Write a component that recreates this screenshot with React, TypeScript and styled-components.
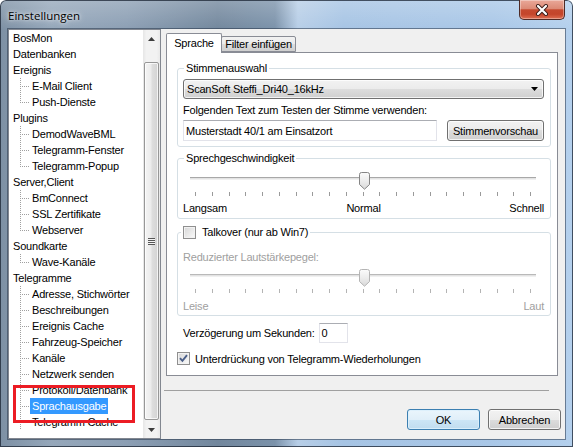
import React from 'react';
import styled, { createGlobalStyle } from 'styled-components';

const GlobalStyle = createGlobalStyle`
  html, body { margin: 0; padding: 0; background: #ffffff; }
  body {
    font-family: "Liberation Sans", Arial, sans-serif;
    font-size: 11px;
    letter-spacing: -0.2px;
    color: #000;
  }
  * { box-sizing: border-box; }
`;

const Window = styled.div`
  position: relative;
  width: 573px;
  height: 447px;
  display: flex;
  flex-direction: column;
  overflow: hidden;
  border-radius: 6px 6px 0 0;
  background:
    linear-gradient(to bottom, rgba(255, 255, 255, 0.22), rgba(255, 255, 255, 0) 30px),
    linear-gradient(
      to right,
      #7d90a4 0%,
      #95a7ba 9%,
      #8c9fb4 22%,
      #72879d 38%,
      #7b92aa 48%,
      #b7cee7 52%,
      #a6c4e4 60%,
      #a9c7e7 86%,
      #b4d0ed 100%
    );
  box-shadow: inset 0 0 0 1px rgba(25, 35, 50, 0.75);
`;

const TitleBar = styled.div`
  flex: none;
  height: 29px;
  display: flex;
  align-items: flex-start;
  padding-left: 8px;
`;

const Title = styled.div`
  margin-top: 8px;
  font-family: "Open Sans", "Noto Sans", sans-serif;
  font-size: 11.5px;
  line-height: 16px;
  letter-spacing: 0;
  color: #000;
  text-shadow: 0 0 6px rgba(255, 255, 255, 0.85), 0 0 3px rgba(255, 255, 255, 0.7);
`;

const CloseButton = styled.div`
  margin-left: auto;
  margin-right: 8px;
  width: 46px;
  height: 20px;
  display: flex;
  align-items: center;
  justify-content: center;
  border: 1px solid #4f2a25;
  border-top: none;
  border-radius: 0 0 5px 5px;
  background: linear-gradient(
    to bottom,
    #e9a899 0%,
    #dc8a76 45%,
    #c5492f 52%,
    #c4452b 75%,
    #de6f53 100%
  );
  box-shadow: inset 0 0 0 1px rgba(255, 255, 255, 0.35);
`;

const Client = styled.div`
  flex: none;
  margin: 0 8px;
  height: 410px;
  display: flex;
  background: #f0f0f0;
  box-shadow: 0 0 0 1px rgba(40, 55, 75, 0.55);
`;

/* ---------- tree ---------- */

const TreePane = styled.div`
  position: relative;
  flex: none;
  width: 153px;
  height: 410px;
  display: flex;
  border: 1px solid #828790;
  background: #fff;
`;

const TreeList = styled.div`
  flex: 1;
  overflow: hidden;
`;

const TreeRow = styled.div<{ $child?: boolean }>`
  height: 16px;
  display: flex;
  align-items: center;
  padding-left: ${(p) => (p.$child ? 0 : 2)}px;
  white-space: nowrap;
`;

const Connector = styled.span<{ $last?: boolean }>`
  position: relative;
  flex: none;
  width: 21px;
  height: 16px;
  &::before {
    content: '';
    position: absolute;
    left: 11px;
    top: 0;
    width: 1px;
    height: ${(p) => (p.$last ? 9 : 16)}px;
    background: repeating-linear-gradient(to bottom, #a0a0a0 0 1px, transparent 1px 2px);
  }
  &::after {
    content: '';
    position: absolute;
    left: 12px;
    top: 8px;
    width: 8px;
    height: 1px;
    background: repeating-linear-gradient(to right, transparent 0 1px, #a0a0a0 1px 2px);
  }
`;

const ItemLabel = styled.span<{ $selected?: boolean }>`
  display: block;
  height: 16px;
  line-height: 16px;
  padding: 0 2px;
  background: ${(p) => (p.$selected ? '#3399ff' : 'transparent')};
  color: ${(p) => (p.$selected ? '#fff' : '#000')};
`;

const ScrollBar = styled.div`
  flex: none;
  width: 17px;
  display: flex;
  flex-direction: column;
  background: linear-gradient(to right, #e6e6e6 0%, #f2f2f2 20%, #f2f2f2 80%, #e9e9e9 100%);
`;

const ScrollArrow = styled.div`
  flex: none;
  height: 17px;
  display: flex;
  align-items: center;
  justify-content: center;
`;

const ScrollTrack = styled.div`
  flex: 1;
  display: flex;
  flex-direction: column;
  padding: 15px 1px 1px 1px;
`;

const ScrollThumb = styled.div`
  flex: 1;
  display: flex;
  align-items: center;
  justify-content: center;
  border: 1px solid #979797;
  border-radius: 2px;
  background: linear-gradient(to right, #f4f4f4 0%, #ececec 45%, #dedede 55%, #d3d3d3 100%);
  box-shadow: inset 0 0 0 1px rgba(255, 255, 255, 0.75);
`;

const Grip = styled.div`
  width: 7px;
  height: 7px;
  background: repeating-linear-gradient(to bottom, #575757 0 1px, #f4f4f4 1px 2px);
`;

const Annotation = styled.div`
  position: absolute;
  left: 4px;
  top: 355px;
  width: 122px;
  height: 38px;
  border: 3px solid #ec1c24;
  pointer-events: none;
`;

/* ---------- right side ---------- */

const RightPane = styled.div`
  flex: none;
  width: 395px;
  margin-left: 5px;
  display: flex;
  flex-direction: column;
`;

const TabControl = styled.div`
  width: 392px;
  margin-top: 4px;
  display: flex;
  flex-direction: column;
`;

const TabStrip = styled.div`
  position: relative;
  z-index: 1;
  height: 19px;
  display: flex;
  align-items: flex-end;
`;

const Tab = styled.div<{ $active?: boolean; $width: number }>`
  position: relative;
  z-index: ${(p) => (p.$active ? 2 : 1)};
  width: ${(p) => p.$width}px;
  height: ${(p) => (p.$active ? 20 : 16)}px;
  margin-bottom: ${(p) => (p.$active ? -1 : 0)}px;
  margin-left: ${(p) => (p.$active ? 0 : -1)}px;
  display: flex;
  justify-content: center;
  padding-top: ${(p) => (p.$active ? 3 : 1)}px;
  line-height: 13px;
  border: 1px solid #898c95;
  border-bottom: ${(p) => (p.$active ? 'none' : '1px solid #898c95')};
  border-radius: 2px 2px 0 0;
  background: ${(p) =>
    p.$active
      ? '#ffffff'
      : 'linear-gradient(to bottom, #f2f2f2 0%, #ebebeb 50%, #dddddd 50%, #cfcfcf 100%)'};
`;

const TabPage = styled.div`
  height: 324px;
  border: 1px solid #898c95;
  background: #fff;
  display: flex;
  flex-direction: column;
`;

const Group = styled.fieldset<{ $height: number; $top: number }>`
  margin: ${(p) => p.$top}px 6px 0 10px;
  padding: 0;
  height: ${(p) => p.$height}px;
  min-width: 0;
  border: 1px solid #d5dfe5;
  border-radius: 3px;
`;

const Legend = styled.legend<{ $offset: number; $disabledText?: boolean }>`
  margin-left: ${(p) => p.$offset}px;
  padding: 0 2px;
  height: 13px;
  line-height: 13px;
  display: flex;
  align-items: center;
  gap: 6px;
  color: ${(p) => (p.$disabledText ? '#a0a0a0' : '#000')};
`;

const GroupBody = styled.div<{ $top: number }>`
  padding: ${(p) => p.$top}px 6px 0 5px;
  display: flex;
  flex-direction: column;
`;

const ComboBox = styled.div`
  height: 20px;
  display: flex;
  align-items: center;
  justify-content: space-between;
  padding: 0 5px 0 3px;
  border: 1px solid #707070;
  border-radius: 3px;
  background: linear-gradient(to bottom, #f2f2f2 0%, #ebebeb 50%, #dddddd 50%, #cfcfcf 100%);
  box-shadow: inset 0 0 0 1px rgba(255, 255, 255, 0.75);
`;

const Caption = styled.div<{ $top: number; $disabled?: boolean }>`
  margin-top: ${(p) => p.$top}px;
  height: 13px;
  line-height: 13px;
  color: ${(p) => (p.$disabled ? '#a0a0a0' : '#000')};
`;

const InputRow = styled.div`
  margin-top: 3px;
  display: flex;
  justify-content: space-between;
`;

const TextBox = styled.div<{ $width: number }>`
  width: ${(p) => p.$width}px;
  height: ${(p) => (p.$width > 100 ? 21 : 20)}px;
  display: flex;
  align-items: center;
  padding-left: 2px;
  border: 1px solid #e2e3ea;
  border-top-color: #abadb3;
  background: #fff;
  white-space: nowrap;
`;

const PushButton = styled.div<{ $default?: boolean; $width: number; $height: number }>`
  width: ${(p) => p.$width}px;
  height: ${(p) => p.$height}px;
  display: flex;
  align-items: center;
  justify-content: center;
  border: 1px solid ${(p) => (p.$default ? '#3c7fb1' : '#707070')};
  border-radius: 3px;
  background: ${(p) =>
    p.$default
      ? 'linear-gradient(to bottom, #eaf5fc 0%, #e0eff9 50%, #cde6f6 50%, #c0dcef 100%)'
      : 'linear-gradient(to bottom, #f2f2f2 0%, #ebebeb 50%, #dddddd 50%, #cfcfcf 100%)'};
  box-shadow: inset 0 0 0 1px ${(p) => (p.$default ? 'rgba(220,240,252,0.9)' : 'rgba(255,255,255,0.75)')};
`;

const SliderBox = styled.div<{ $top: number }>`
  position: relative;
  margin-top: ${(p) => p.$top}px;
  height: 24px;
`;

const Track = styled.div<{ $disabled?: boolean }>`
  margin: 5px 0 0 7px;
  width: 346px;
  height: 3px;
  border-top: 1px solid ${(p) => (p.$disabled ? '#b9b9b9' : '#a8a8a8')};
  border-bottom: 1px solid #f0f0f0;
  background: #e3e3e3;
`;

const Ticks = styled.div`
  margin: 12px 0 0 12px;
  width: 336px;
  height: 4px;
  display: flex;
  justify-content: space-between;
`;

const Tick = styled.span<{ $disabled?: boolean }>`
  width: 1px;
  height: 4px;
  background: ${(p) => (p.$disabled ? '#b4b4b4' : '#9a9a9a')};
`;

const Thumb = styled.div`
  position: absolute;
  top: 0;
  width: 11px;
  height: 18px;
  line-height: 0;
`;

const ScaleLabels = styled.div<{ $top: number; $disabled?: boolean }>`
  margin-top: ${(p) => p.$top}px;
  height: 13px;
  line-height: 13px;
  display: grid;
  grid-template-columns: 1fr auto 1fr;
  color: ${(p) => (p.$disabled ? '#a0a0a0' : '#000')};
  & > :nth-child(1) { justify-self: start; }
  & > :nth-child(2) { justify-self: center; }
  & > :nth-child(3) { justify-self: end; }
`;

const FieldRow = styled.div`
  margin: 7px 0 0 16px;
  height: 20px;
  display: flex;
  align-items: center;
  gap: 4px;
`;

const CheckRow = styled.div`
  margin: 9px 0 0 10px;
  height: 13px;
  display: flex;
  align-items: center;
  gap: 5px;
`;

const CheckBox = styled.span<{ $checked?: boolean }>`
  flex: none;
  width: 13px;
  height: 13px;
  display: flex;
  align-items: center;
  justify-content: center;
  border: 1px solid #8f8f8f;
  background: linear-gradient(135deg, #d6d6d6 0%, #ececec 60%, #fbfbfb 100%);
  box-shadow: inset 0 0 0 1px #f2f2f2;
`;

const Separator = styled.div`
  margin: 14px 0 0 -2px;
  width: 385px;
  height: 1px;
  background: #a0a0a0;
`;

const ButtonRow = styled.div`
  margin-top: 18px;
  display: flex;
  justify-content: flex-end;
  gap: 8px;
`;

/* ---------- data ---------- */

type Node = { label: string; children?: string[]; continues?: boolean };

const tree: Node[] = [
  { label: 'BosMon' },
  { label: 'Datenbanken' },
  { label: 'Ereignis', children: ['E-Mail Client', 'Push-Dienste'] },
  { label: 'Plugins', children: ['DemodWaveBML', 'Telegramm-Fenster', 'Telegramm-Popup'] },
  { label: 'Server,Client', children: ['BmConnect', 'SSL Zertifikate', 'Webserver'] },
  { label: 'Soundkarte', children: ['Wave-Kanäle'] },
  {
    label: 'Telegramme',
    continues: true,
    children: [
      'Adresse, Stichwörter',
      'Beschreibungen',
      'Ereignis Cache',
      'Fahrzeug-Speicher',
      'Kanäle',
      'Netzwerk senden',
      'Protokoll/Datenbank',
      'Sprachausgabe',
      'Telegramm Cache',
    ],
  },
];

const SELECTED = 'Sprachausgabe';

const SliderThumb = ({ disabled }: { disabled?: boolean }) => (
  <svg width="11" height="18" viewBox="0 0 11 18">
    <defs>
      <linearGradient id={disabled ? 'thD' : 'thE'} x1="0" y1="0" x2="0" y2="1">
        <stop offset="0" stopColor="#fbfbfb" />
        <stop offset="0.5" stopColor="#ececec" />
        <stop offset="1" stopColor="#d9d9d9" />
      </linearGradient>
    </defs>
    <path
      d="M0.5 2.5 Q0.5 0.5 2.5 0.5 H8.5 Q10.5 0.5 10.5 2.5 V12.5 L5.5 17.2 L0.5 12.5 Z"
      fill={`url(#${disabled ? 'thD' : 'thE'})`}
      stroke={disabled ? '#b4b4b4' : '#858585'}
    />
  </svg>
);

const Slider = ({ value, disabled, top }: { value: number; disabled?: boolean; top: number }) => (
  <SliderBox $top={top}>
    <Track $disabled={disabled} />
    <Ticks>
      {Array.from({ length: 21 }).map((_, i) => (
        <Tick key={i} $disabled={disabled} />
      ))}
    </Ticks>
    <Thumb style={{ left: Math.round(12 + (value / 20) * 335 - 5) + 0.5 }}>
      <SliderThumb disabled={disabled} />
    </Thumb>
  </SliderBox>
);

const Check = () => (
  <svg width="9" height="9" viewBox="0 0 9 9">
    <path d="M1 4.2 L3.4 6.8 L8 1.2" fill="none" stroke="#4a5e88" strokeWidth="1.9" />
  </svg>
);

export default function App() {
  return (
    <>
      <GlobalStyle />
      <Window>
        <TitleBar>
          <Title>Einstellungen</Title>
          <CloseButton>
            <svg width="14" height="12" viewBox="0 0 14 12">
              <path d="M3 2 L11 10 M11 2 L3 10" stroke="#3b1d19" strokeWidth="4" strokeLinecap="round" />
              <path d="M3 2 L11 10 M11 2 L3 10" stroke="#ffffff" strokeWidth="2.2" strokeLinecap="round" />
            </svg>
          </CloseButton>
        </TitleBar>
        <Client>
          <TreePane>
            <TreeList>
              {tree.map((node) => (
                <React.Fragment key={node.label}>
                  <TreeRow>
                    <ItemLabel>{node.label}</ItemLabel>
                  </TreeRow>
                  {node.children?.map((child, i, arr) => (
                    <TreeRow key={child} $child>
                      <Connector $last={i === arr.length - 1 && !node.continues} />
                      <ItemLabel $selected={child === SELECTED}>{child}</ItemLabel>
                    </TreeRow>
                  ))}
                </React.Fragment>
              ))}
            </TreeList>
            <ScrollBar>
              <ScrollArrow>
                <svg width="7" height="4" viewBox="0 0 7 4">
                  <path d="M0 4 L3.5 0 L7 4 Z" fill="#3c3c3c" />
                </svg>
              </ScrollArrow>
              <ScrollTrack>
                <ScrollThumb>
                  <Grip />
                </ScrollThumb>
              </ScrollTrack>
              <ScrollArrow>
                <svg width="7" height="4" viewBox="0 0 7 4">
                  <path d="M0 0 L7 0 L3.5 4 Z" fill="#3c3c3c" />
                </svg>
              </ScrollArrow>
            </ScrollBar>
            <Annotation />
          </TreePane>

          <RightPane>
            <TabControl>
              <TabStrip>
                <Tab $active $width={56}>Sprache</Tab>
                <Tab $width={75}>Filter einfügen</Tab>
              </TabStrip>
              <TabPage>
                <Group $top={9} $height={85}>
                  <Legend $offset={6}>Stimmenauswahl</Legend>
                  <GroupBody $top={4}>
                    <ComboBox>
                      <span>ScanSoft Steffi_Dri40_16kHz</span>
                      <svg width="7" height="4" viewBox="0 0 7 4">
                        <path d="M0 0 L7 0 L3.5 4 Z" fill="#000" />
                      </svg>
                    </ComboBox>
                    <Caption $top={5}>Folgenden Text zum Testen der Stimme verwenden:</Caption>
                    <InputRow>
                      <TextBox $width={254}>Musterstadt 40/1 am Einsatzort</TextBox>
                      <PushButton $width={97} $height={21}>Stimmenvorschau</PushButton>
                    </InputRow>
                  </GroupBody>
                </Group>

                <Group $top={5} $height={67}>
                  <Legend $offset={6}>Sprechgeschwindigkeit</Legend>
                  <GroupBody $top={0}>
                    <Slider value={10} top={7} />
                    <ScaleLabels $top={6}>
                      <span>Langsam</span>
                      <span>Normal</span>
                      <span>Schnell</span>
                    </ScaleLabels>
                  </GroupBody>
                </Group>

                <Group $top={7} $height={90}>
                  <Legend $offset={3}>
                    <CheckBox />
                    <span>Talkover (nur ab Win7)</span>
                  </Legend>
                  <GroupBody $top={0}>
                    <Caption $top={12} $disabled>Reduzierter Lautstärkepegel:</Caption>
                    <Slider value={10} top={5} disabled />
                    <ScaleLabels $top={7} $disabled>
                      <span>Leise</span>
                      <span />
                      <span>Laut</span>
                    </ScaleLabels>
                  </GroupBody>
                </Group>

                <FieldRow>
                  <span>Verzögerung um Sekunden:</span>
                  <TextBox $width={29}>0</TextBox>
                </FieldRow>

                <CheckRow>
                  <CheckBox $checked>
                    <Check />
                  </CheckBox>
                  <span>Unterdrückung von Telegramm-Wiederholungen</span>
                </CheckRow>
              </TabPage>
            </TabControl>

            <Separator />

            <ButtonRow>
              <PushButton $default $width={73} $height={21}>OK</PushButton>
              <PushButton $width={73} $height={21}>Abbrechen</PushButton>
            </ButtonRow>
          </RightPane>
        </Client>
      </Window>
    </>
  );
}
